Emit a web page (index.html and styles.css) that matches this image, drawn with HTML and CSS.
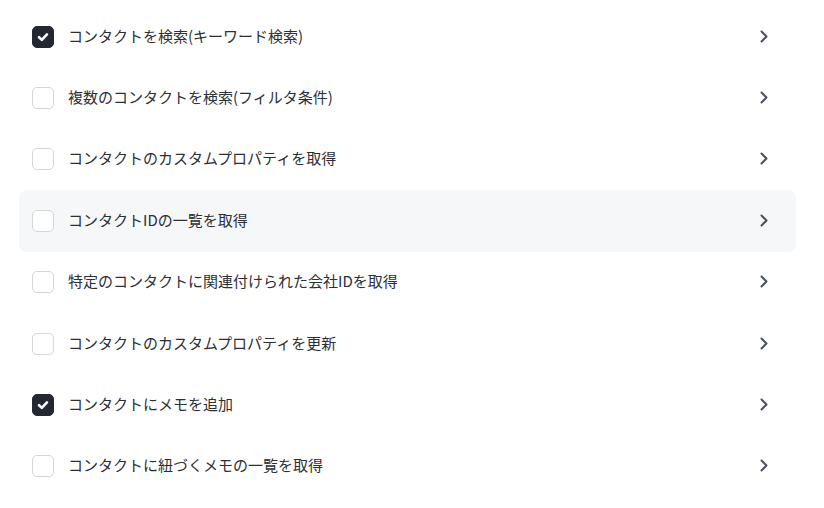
FILE: index.html
```html
<!DOCTYPE html>
<html lang="ja">
<head>
    <meta charset="UTF-8">
    <title>コンタクト操作</title>
    <link rel="stylesheet" href="styles.css">
</head>
<body>

<ul class="action-list">
    <li class="action-row">
        <span class="check is-checked"><svg viewBox="0 0 12 12"><path d="M2.6 6.2 L5 8.5 L9.4 3.8"/></svg></span>
        <span class="action-label">コンタクトを検索(キーワード検索)</span>
        <svg class="chevron" viewBox="0 0 16 16"><path d="M5.5 2.5 L10.5 7.5 L5.5 12.5"/></svg>
    </li>
    <li class="action-row">
        <span class="check"></span>
        <span class="action-label">複数のコンタクトを検索(フィルタ条件)</span>
        <svg class="chevron" viewBox="0 0 16 16"><path d="M5.5 2.5 L10.5 7.5 L5.5 12.5"/></svg>
    </li>
    <li class="action-row">
        <span class="check"></span>
        <span class="action-label">コンタクトのカスタムプロパティを取得</span>
        <svg class="chevron" viewBox="0 0 16 16"><path d="M5.5 2.5 L10.5 7.5 L5.5 12.5"/></svg>
    </li>
    <li class="action-row is-hover">
        <span class="check"></span>
        <span class="action-label">コンタクトIDの一覧を取得</span>
        <svg class="chevron" viewBox="0 0 16 16"><path d="M5.5 2.5 L10.5 7.5 L5.5 12.5"/></svg>
    </li>
    <li class="action-row">
        <span class="check"></span>
        <span class="action-label">特定のコンタクトに関連付けられた会社IDを取得</span>
        <svg class="chevron" viewBox="0 0 16 16"><path d="M5.5 2.5 L10.5 7.5 L5.5 12.5"/></svg>
    </li>
    <li class="action-row">
        <span class="check"></span>
        <span class="action-label">コンタクトのカスタムプロパティを更新</span>
        <svg class="chevron" viewBox="0 0 16 16"><path d="M5.5 2.5 L10.5 7.5 L5.5 12.5"/></svg>
    </li>
    <li class="action-row">
        <span class="check is-checked"><svg viewBox="0 0 12 12"><path d="M2.6 6.2 L5 8.5 L9.4 3.8"/></svg></span>
        <span class="action-label">コンタクトにメモを追加</span>
        <svg class="chevron" viewBox="0 0 16 16"><path d="M5.5 2.5 L10.5 7.5 L5.5 12.5"/></svg>
    </li>
    <li class="action-row">
        <span class="check"></span>
        <span class="action-label">コンタクトに紐づくメモの一覧を取得</span>
        <svg class="chevron" viewBox="0 0 16 16"><path d="M5.5 2.5 L10.5 7.5 L5.5 12.5"/></svg>
    </li>
</ul>

</body>
</html>
```

FILE: styles.css
```css
body {
    margin: 0;
    background-color: #ffffff;
    font-family: "Noto Sans CJK JP", "Noto Sans", sans-serif;
    color: #2b2f36;
}

.action-list {
    list-style: none;
    margin: 0;
    padding: 6px 28px 0 19px;
}

.action-row {
    display: flex;
    align-items: center;
    height: 61.4px;
    padding: 0 24px 0 13px;
    border-radius: 8px;
    cursor: pointer;
}

.action-row.is-hover {
    background-color: #f6f7f9;
}

.check {
    flex: none;
    width: 20px;
    height: 20px;
    border: 1px solid #d3d6db;
    border-radius: 5px;
    background-color: #ffffff;
    display: flex;
    align-items: center;
    justify-content: center;
}

.check.is-checked {
    background-color: #242832;
    border-color: #242832;
}

.check svg {
    width: 14px;
    height: 14px;
    fill: none;
    stroke: #ffffff;
    stroke-width: 2.2;
    stroke-linecap: round;
    stroke-linejoin: round;
}

.action-label {
    flex: 1;
    margin-left: 14px;
    padding-bottom: 2px;
    font-size: 15px;
    line-height: 22px;
}

.chevron {
    flex: none;
    width: 16px;
    height: 16px;
    fill: none;
    stroke: #4a505a;
    stroke-width: 2;
    stroke-linecap: round;
    stroke-linejoin: round;
}
```
